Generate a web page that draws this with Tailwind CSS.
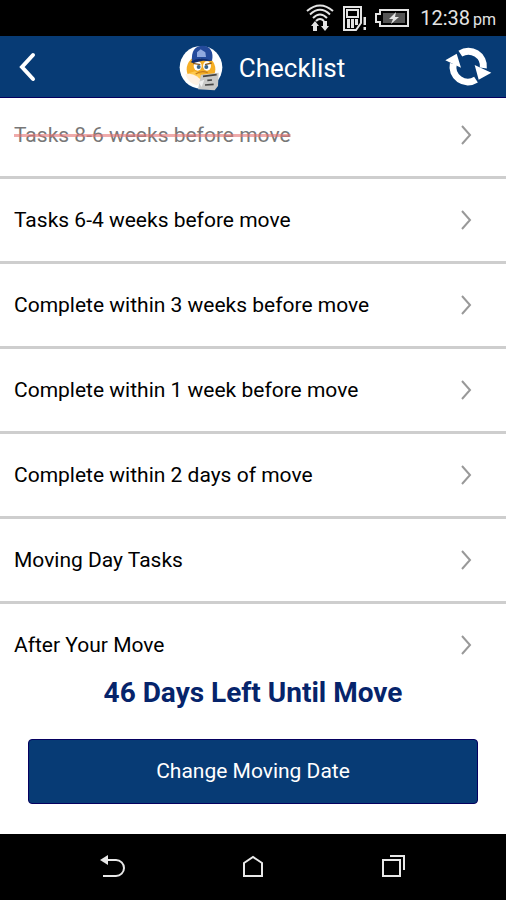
<!DOCTYPE html>
<html lang="en">
<head>
    <meta charset="UTF-8">
    <meta name="viewport" content="width=device-width, initial-scale=1.0">
    <title>Checklist</title>
    <script src="https://cdn.jsdelivr.net/npm/@tailwindcss/browser@4"></script>
</head>
<body class="bg-white font-[Roboto,sans-serif] text-black">
    <div class="flex h-screen flex-col">
        <!-- Status bar -->
        <div class="flex h-9 shrink-0 items-center justify-end bg-black pr-2.5 text-[#e4e4e4]">
            <svg class="mr-2 h-7 w-7" viewBox="0 0 28 28" fill="none" stroke="currentColor" stroke-width="2">
                <path d="M1 7Q14 -4 27 7M4 10.500Q14 1 24 10.500M7 14Q14 7 21 14M10 17Q14 13 18 17"/>
                <path d="M9 17l4 5h-2v5H7v-5H5zM19 27l-4-5h2v-5h4v5h2z" fill="currentColor" stroke="none"/>
            </svg>
            <svg class="mr-2 h-7 w-6" viewBox="0 0 24 28" fill="none" stroke="currentColor" stroke-width="2">
                <path d="M2 3h17v16l-5 7H2z"/>
                <path d="M5 6h11v7H5z"/>
                <path d="M6.500 15v9M10.500 15v9M14.500 15v6" stroke-width="3"/>
                <path d="M23 13v8M23 23v3" stroke-width="3"/>
            </svg>
            <svg class="mr-2.5 h-5 w-9" viewBox="0 0 36 20" fill="none" stroke="currentColor" stroke-width="2">
                <path d="M6 2h28v16H6v-4H2V6h4z"/>
                <path d="M9 5h22v10H9z" fill="#555" stroke="none"/>
                <path d="M22 4l-7 7h4l-2 5 8-7h-4z" fill="currentColor" stroke="none"/>
            </svg>
            <span class="text-xl">12:38 <span class="-ml-0.5 text-base">pm</span></span>
        </div>

        <!-- Header -->
        <header class="flex h-[62px] shrink-0 items-center justify-between border-b border-[#05005f] bg-[#073b75] px-3.5 text-white">
            <button type="button" aria-label="Back" class="w-16">
                <svg class="h-8 w-7" viewBox="0 0 28 32" fill="none" stroke="currentColor" stroke-width="4" stroke-linecap="round">
                    <path d="M19 4L8 16l11 12"/>
                </svg>
            </button>
            <div class="flex items-center gap-3.5 pt-0.5">
                <svg class="size-12" viewBox="0 0 144 144" aria-hidden="true">
                    <circle cx="72" cy="70" r="64" fill="#fff"/>
                    <ellipse cx="72" cy="76" rx="43" ry="42" fill="#f5ae25"/>
                    <path d="M34 88q8 26 38 32l8-22-26-16z" fill="#ffc94f"/>
                    <ellipse cx="62" cy="66" rx="12" ry="14" fill="#fff"/>
                    <ellipse cx="90" cy="66" rx="12" ry="14" fill="#fff"/>
                    <circle cx="65" cy="69" r="6" fill="#37648b"/>
                    <circle cx="88" cy="69" r="6" fill="#37648b"/>
                    <path d="M48 58l22 4M84 62l20-5" stroke="#8a5a1c" stroke-width="4"/>
                    <path d="M56 90q18-12 36-4" fill="none" stroke="#c17a1c" stroke-width="4"/>
                    <path d="M45 54C42 20 54 6 77 5c23 0 34 20 28 45l-17 1-18-7z" fill="#244a9b"/>
                    <path d="M40 54q25-18 66-4l-28 0-30 7z" fill="#102b6d"/>
                    <path d="M60 25l11-9 14 9 2 14H60z" fill="#91a9df"/>
                    <path d="M25 91q18-6 34 6l15 12q-4 12-15 15-24-5-34-33z" fill="#fff1e3"/>
                    <path d="M72 92l53-6-2 40-10 13-50-3z" fill="#c9c9c8"/>
                    <path d="M78 97l41-5M91 109l14-1M84 123l26-2" stroke="#444" stroke-width="5"/>
                    <path d="M64 114l18-7-8 22z" fill="#eee"/>
                </svg>
                <h1 class="text-[26px] leading-8">Checklist</h1>
            </div>
            <button type="button" aria-label="Refresh" class="w-12">
                <svg class="h-[39px] w-12" viewBox="45 35 144 117" fill="none" stroke="currentColor" stroke-width="21">
                    <path d="M94 55A45 45 0 0 1 163 98M141 133A45 45 0 0 1 73 85"/>
                    <path d="M49 75l34-20 13 42zM187 112l-38 21-12-44z" fill="currentColor" stroke="none"/>
                </svg>
            </button>
        </header>

        <!-- Task groups -->
        <main class="min-h-0 flex-1 overflow-hidden">
            <ul class="-mt-1 text-[21px] leading-7">
                <li class="h-[85px] border-b-3 border-[#cecece]">
                    <a href="#" class="flex h-full items-center justify-between pr-8 pl-3.5 text-[#777]">
                        <span class="line-through decoration-[#e57373]/60 decoration-3">Tasks 8-6 weeks before move</span>
                        <svg class="h-6 w-4 text-[#999]" viewBox="0 0 16 24" fill="none" stroke="currentColor" stroke-width="2"><path d="M4 3l8 9-8 9"/></svg>
                    </a>
                </li>
                <li class="h-[85px] border-b-3 border-[#cecece]">
                    <a href="#" class="flex h-full items-center justify-between pr-8 pl-3.5">
                        <span>Tasks 6-4 weeks before move</span>
                        <svg class="h-6 w-4 text-[#999]" viewBox="0 0 16 24" fill="none" stroke="currentColor" stroke-width="2"><path d="M4 3l8 9-8 9"/></svg>
                    </a>
                </li>
                <li class="h-[85px] border-b-3 border-[#cecece]">
                    <a href="#" class="flex h-full items-center justify-between pr-8 pl-3.5">
                        <span>Complete within 3 weeks before move</span>
                        <svg class="h-6 w-4 text-[#999]" viewBox="0 0 16 24" fill="none" stroke="currentColor" stroke-width="2"><path d="M4 3l8 9-8 9"/></svg>
                    </a>
                </li>
                <li class="h-[85px] border-b-3 border-[#cecece]">
                    <a href="#" class="flex h-full items-center justify-between pr-8 pl-3.5">
                        <span>Complete within 1 week before move</span>
                        <svg class="h-6 w-4 text-[#999]" viewBox="0 0 16 24" fill="none" stroke="currentColor" stroke-width="2"><path d="M4 3l8 9-8 9"/></svg>
                    </a>
                </li>
                <li class="h-[85px] border-b-3 border-[#cecece]">
                    <a href="#" class="flex h-full items-center justify-between pr-8 pl-3.5">
                        <span>Complete within 2 days of move</span>
                        <svg class="h-6 w-4 text-[#999]" viewBox="0 0 16 24" fill="none" stroke="currentColor" stroke-width="2"><path d="M4 3l8 9-8 9"/></svg>
                    </a>
                </li>
                <li class="h-[85px] border-b-3 border-[#cecece]">
                    <a href="#" class="flex h-full items-center justify-between pr-8 pl-3.5">
                        <span>Moving Day Tasks</span>
                        <svg class="h-6 w-4 text-[#999]" viewBox="0 0 16 24" fill="none" stroke="currentColor" stroke-width="2"><path d="M4 3l8 9-8 9"/></svg>
                    </a>
                </li>
                <li class="h-[85px] border-b-3 border-[#cecece]">
                    <a href="#" class="flex h-full items-center justify-between pr-8 pl-3.5">
                        <span>After Your Move</span>
                        <svg class="h-6 w-4 text-[#999]" viewBox="0 0 16 24" fill="none" stroke="currentColor" stroke-width="2"><path d="M4 3l8 9-8 9"/></svg>
                    </a>
                </li>
            </ul>
        </main>

        <!-- Countdown -->
        <section class="shrink-0 px-7 pt-2 pb-[30px] text-center">
            <h2 class="text-[28px] leading-9 font-bold text-[#06246b]">46 Days Left Until Move</h2>
            <button type="button" class="mt-7 h-[65px] w-full rounded border border-[#05005f] bg-[#073b75] text-[21px] text-white">Change Moving Date</button>
        </section>

        <!-- System navigation -->
        <nav class="flex h-[66px] shrink-0 items-center justify-center gap-28 bg-black text-[#e8e8e8]">
            <button type="button" aria-label="Back">
                <svg class="h-7 w-7" viewBox="0 0 28 28" fill="none" stroke="currentColor" stroke-width="2">
                    <path d="M5 7h12a8 8 0 0 1 0 16H4"/>
                    <path d="M1 7l8-5v10z" fill="currentColor" stroke="none"/>
                </svg>
            </button>
            <button type="button" aria-label="Home">
                <svg class="h-7 w-7" viewBox="0 0 28 28" fill="none" stroke="currentColor" stroke-width="2">
                    <path d="M5 10l9-6 9 6v13H5z"/>
                </svg>
            </button>
            <button type="button" aria-label="Recent apps">
                <svg class="h-7 w-7" viewBox="0 0 28 28" fill="none" stroke="currentColor" stroke-width="2">
                    <path d="M4 7h17v16H4z"/>
                    <path d="M11 3h14v14"/>
                </svg>
            </button>
        </nav>
    </div>
</body>
</html>
